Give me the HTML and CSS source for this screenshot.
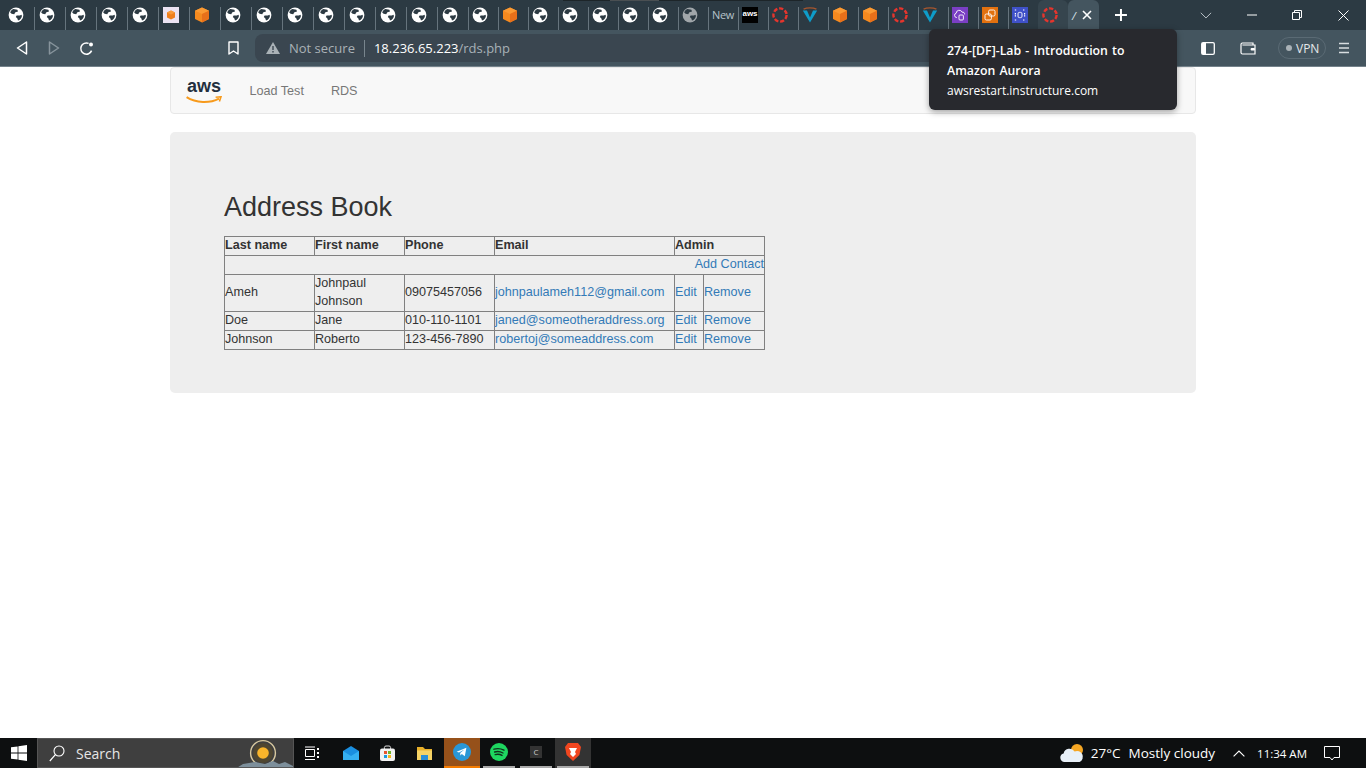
FILE: index.html
```html
<!DOCTYPE html>
<html lang="en">

<head>
    <meta charset="UTF-8">
    <title>Address Book</title>
    <link rel="stylesheet" href="styles.css">
</head>

<body>

    <svg class="defs" width="0" height="0">
        <symbol id="globe" viewBox="0 0 16 16">
            <circle cx="8" cy="8" r="7.4" fill="#fff" />
            <path d="M5.4 2 9.4 2.8 10 4.4 7.4 5.2 6.2 7.2 3.6 6.8 2.2 5.4C2.8 3.8 4 2.6 5.4 2Z" fill="#2c3a43" />
            <path d="M8.6 8.4 11.8 8.6 13.6 7.8 13.9 9.2C13.4 11.2 12 12.8 10 13.6L9.4 11.4 7.8 10Z" fill="#2c3a43" />
        </symbol>
        <symbol id="cube" viewBox="0 0 16 16">
            <path d="M8 .6 15 3.8V12L8 15.4 1 12V3.8Z" fill="#f58a1f" />
            <path d="M8 .6 15 3.8 8 7 1 3.8Z" fill="#fb9a33" />
            <path d="M8 7 15 3.8V12L8 15.4Z" fill="#e8701a" />
        </symbol>
        <symbol id="ring" viewBox="0 0 16 16">
            <circle cx="8" cy="8" r="6.6" fill="none" stroke="#e5352d" stroke-width="2.4" stroke-dasharray="4.2 1.8" />
        </symbol>
        <symbol id="vee" viewBox="0 0 16 16">
            <path d="M1.6 2.2C5 .4 11 .4 14.4 2.2" fill="none" stroke="#a8562e" stroke-width="1.4" />
            <path d="M.8 3.4H5L8 10.4 11 3.4H15.2L8 15.6Z" fill="#0e9cc9" />
        </symbol>
    </svg>

    <div class="tab_scroll"><div class="tab_scroll_thumb"></div></div>

    <div class="tabstrip">
        <div class="tab wide"><svg class="fav"><use href="#globe" /></svg></div>
        <div class="tab wide"><svg class="fav"><use href="#globe" /></svg></div>
        <div class="tab wide"><svg class="fav"><use href="#globe" /></svg></div>
        <div class="tab wide"><svg class="fav"><use href="#globe" /></svg></div>
        <div class="tab wide"><svg class="fav"><use href="#globe" /></svg></div>
        <div class="tab wide">
            <svg class="fav" viewBox="0 0 16 16">
                <rect width="16" height="16" fill="#ebe2f2" />
                <path d="M8 3.4 12 5.4V10.4L8 12.6 4 10.4V5.4Z" fill="#f07f1c" />
                <path d="M8 3.4 12 5.4 8 7.4 4 5.4Z" fill="#f99a3a" />
            </svg>
        </div>
        <div class="tab wide"><svg class="fav"><use href="#cube" /></svg></div>
        <div class="tab wide"><svg class="fav"><use href="#globe" /></svg></div>
        <div class="tab wide"><svg class="fav"><use href="#globe" /></svg></div>
        <div class="tab wide"><svg class="fav"><use href="#globe" /></svg></div>
        <div class="tab wide"><svg class="fav"><use href="#globe" /></svg></div>
        <div class="tab wide"><svg class="fav"><use href="#globe" /></svg></div>
        <div class="tab wide"><svg class="fav"><use href="#globe" /></svg></div>
        <div class="tab wide"><svg class="fav"><use href="#globe" /></svg></div>
        <div class="tab wide"><svg class="fav"><use href="#globe" /></svg></div>
        <div class="tab"><svg class="fav"><use href="#globe" /></svg></div>
        <div class="tab"><svg class="fav"><use href="#cube" /></svg></div>
        <div class="tab"><svg class="fav"><use href="#globe" /></svg></div>
        <div class="tab"><svg class="fav"><use href="#globe" /></svg></div>
        <div class="tab"><svg class="fav"><use href="#globe" /></svg></div>
        <div class="tab"><svg class="fav"><use href="#globe" /></svg></div>
        <div class="tab"><svg class="fav"><use href="#globe" /></svg></div>
        <div class="tab"><svg class="fav dim"><use href="#globe" /></svg></div>
        <div class="tab"><span class="tab_title">New</span></div>
        <div class="tab"><div class="fav aws_fav">aws</div></div>
        <div class="tab"><svg class="fav"><use href="#ring" /></svg></div>
        <div class="tab"><svg class="fav"><use href="#vee" /></svg></div>
        <div class="tab"><svg class="fav"><use href="#cube" /></svg></div>
        <div class="tab"><svg class="fav"><use href="#cube" /></svg></div>
        <div class="tab"><svg class="fav"><use href="#ring" /></svg></div>
        <div class="tab"><svg class="fav"><use href="#vee" /></svg></div>
        <div class="tab">
            <svg class="fav" viewBox="0 0 16 16">
                <rect width="16" height="16" fill="#7a3fc4" />
                <path d="M5 10.5H4.4A2.2 2.2 0 0 1 4.2 6.2 3 3 0 0 1 10 5.2 2 2 0 0 1 12.6 7.4" fill="none" stroke="#fff" stroke-width=".9" />
                <rect x="7" y="8" width="4.4" height="5" rx="1" fill="none" stroke="#fff" stroke-width=".9" />
            </svg>
        </div>
        <div class="tab">
            <svg class="fav" viewBox="0 0 16 16">
                <rect width="16" height="16" fill="#e2710f" />
                <rect x="3" y="7" width="6.4" height="6" rx="1.4" fill="none" stroke="#fff" stroke-width=".9" />
                <rect x="6.6" y="3" width="6.4" height="6" rx="1.4" fill="none" stroke="#fff" stroke-width=".9" />
            </svg>
        </div>
        <div class="tab">
            <svg class="fav" viewBox="0 0 16 16">
                <rect width="16" height="16" fill="#3f51c8" />
                <rect x="6" y="5.4" width="4" height="5.2" rx="1.4" fill="none" stroke="#fff" stroke-width=".9" />
                <path d="M2.8 3H5M11 3H13.2M2.8 13H5M11 13H13.2M3.4 6V10M12.6 6V10" stroke="#fff" stroke-width="1.2" stroke-dasharray="1.4 .8" />
            </svg>
        </div>
        <div class="tab hovered"><svg class="fav"><use href="#ring" /></svg></div>
        <div class="tab active">
            <span class="tab_sliver">/</span>
            <svg class="tab_close" viewBox="0 0 10 10"><path d="M1 1 9 9M9 1 1 9" stroke="#fff" stroke-width="1.6" /></svg>
        </div>
        <svg class="new_tab" viewBox="0 0 12 12"><path d="M6 0V12M0 6H12" stroke="#fff" stroke-width="2" /></svg>
        <svg class="tab_list" viewBox="0 0 12 7"><path d="M.8 .8 6 6 11.2 .8" fill="none" stroke="#b9c2c8" stroke-width="1" /></svg>
        <div class="win_btn minimize"><svg width="10" height="10" viewBox="0 0 10 10"><path d="M0 5H10" stroke="#fff" /></svg></div>
        <div class="win_btn"><svg width="10" height="10" viewBox="0 0 10 10"><path d="M.5 2.5H7.5V9.5H.5ZM2.5 2.5V.5H9.5V7.5H7.5" fill="none" stroke="#fff" /></svg></div>
        <div class="win_btn"><svg width="11" height="11" viewBox="0 0 11 11"><path d="M.5 .5 10.5 10.5M10.5 .5 .5 10.5" stroke="#fff" /></svg></div>
    </div>

    <div class="toolbar">
        <div class="tool_btn"><svg width="12" height="14" viewBox="0 0 12 14"><path d="M10.5 1V13L1.5 7Z" fill="none" stroke="#fff" stroke-width="1.5" stroke-linejoin="round" /></svg></div>
        <div class="tool_btn"><svg width="12" height="14" viewBox="0 0 12 14"><path d="M1.5 1V13L10.5 7Z" fill="none" stroke="#87949c" stroke-width="1.5" stroke-linejoin="round" /></svg></div>
        <div class="tool_btn"><svg width="15" height="15" viewBox="0 0 15 15"><path d="M12.6 9.6A5.6 5.6 0 1 1 9.6 2.4" fill="none" stroke="#fff" stroke-width="1.5" /><circle cx="12" cy="3.4" r="2" fill="#fff" /></svg></div>
        <div class="tool_btn bookmark"><svg width="11" height="14" viewBox="0 0 11 14"><path d="M1 1H10V13L5.5 10 1 13Z" fill="none" stroke="#fff" stroke-width="1.4" stroke-linejoin="round" /></svg></div>
        <div class="urlbar">
            <svg class="warn" width="14" height="12" viewBox="0 0 14 12"><path d="M7 0 14 12H0Z" fill="#aab2b7" /><path d="M7 4V8M7 9V10.6" stroke="#3a4650" stroke-width="1.4" /></svg>
            <span class="not_secure">Not secure</span>
            <span class="url_host">18.236.65.223</span><span class="url_path">/rds.php</span>
        </div>
        <div class="tool_btn side_panel"><svg width="14" height="13" viewBox="0 0 14 13"><rect x=".7" y=".7" width="12.6" height="11.6" rx="1.4" fill="none" stroke="#fff" stroke-width="1.3" /><rect x="1" y="1" width="4" height="11" fill="#fff" /></svg></div>
        <div class="tool_btn wallet"><svg width="16" height="13" viewBox="0 0 16 13"><path d="M13 2.6V1H2.4A1.5 1.5 0 0 0 1 2.5V10.5A1.5 1.5 0 0 0 2.5 12H15V3H2.4" fill="none" stroke="#fff" stroke-width="1.2" /><rect x="10.6" y="6" width="4.4" height="2.6" rx="1" fill="#fff" /></svg></div>
        <div class="vpn"><span class="vpn_dot"></span>VPN</div>
        <div class="tool_btn menu"><svg width="12" height="12" viewBox="0 0 12 12"><path d="M1 1.5H11M1 6H11M1 10.5H11" stroke="#d8dde0" stroke-width="1.4" /></svg></div>
    </div>

    <div class="tooltip">
        <div class="tooltip_title">274-[DF]-Lab - Introduction to Amazon Aurora</div>
        <div class="tooltip_host">awsrestart.instructure.com</div>
    </div>

    <div class="page">
        <div class="container">
            <div class="navbar">
                <div class="aws_logo">
                    <span class="aws_word">aws</span>
                    <svg class="aws_smile" viewBox="0 0 36 8"><path d="M.6 1.2C10 7.4 24 7.4 33 2.6" fill="none" stroke="#f79a1c" stroke-width="2" /><path d="M29.6 1.2 35 .8 33.4 5.4" fill="none" stroke="#f79a1c" stroke-width="1.6" /></svg>
                </div>
                <a class="nav_link">Load Test</a>
                <a class="nav_link">RDS</a>
            </div>

            <div class="jumbotron">
                <h1>Address Book</h1>
                <table>
                    <colgroup>
                        <col class="col_name">
                        <col class="col_name">
                        <col class="col_name">
                        <col class="col_email">
                        <col class="col_edit">
                        <col class="col_remove">
                    </colgroup>
                    <tr>
                        <th>Last name</th>
                        <th>First name</th>
                        <th>Phone</th>
                        <th>Email</th>
                        <th colspan="2">Admin</th>
                    </tr>
                    <tr>
                        <td colspan="6" class="add_row"><a>Add Contact</a></td>
                    </tr>
                    <tr class="tall_row">
                        <td>Ameh</td>
                        <td class="two_line">Johnpaul Johnson</td>
                        <td>09075457056</td>
                        <td><a>johnpaulameh112@gmail.com</a></td>
                        <td><a>Edit</a></td>
                        <td><a>Remove</a></td>
                    </tr>
                    <tr>
                        <td>Doe</td>
                        <td>Jane</td>
                        <td>010-110-1101</td>
                        <td><a>janed@someotheraddress.org</a></td>
                        <td><a>Edit</a></td>
                        <td><a>Remove</a></td>
                    </tr>
                    <tr>
                        <td>Johnson</td>
                        <td>Roberto</td>
                        <td>123-456-7890</td>
                        <td><a>robertoj@someaddress.com</a></td>
                        <td><a>Edit</a></td>
                        <td><a>Remove</a></td>
                    </tr>
                </table>
            </div>
        </div>
    </div>

    <div class="taskbar">
        <div class="start">
            <svg width="16" height="16" viewBox="0 0 16 16"><path d="M0 2.3 6.6 1.4V7.6H0ZM7.4 1.3 16 0V7.6H7.4ZM0 8.4H6.6V14.6L0 13.7ZM7.4 8.4H16V16L7.4 14.7Z" fill="#fff" /></svg>
        </div>
        <div class="search">
            <svg width="16" height="17" viewBox="0 0 16 17"><circle cx="10" cy="6" r="5" fill="none" stroke="#fff" stroke-width="1.1" /><path d="M6.4 9.6 .8 16" stroke="#fff" stroke-width="1.2" /></svg>
            <span class="search_text">Search</span>
            <svg class="search_art" width="62" height="30" viewBox="0 0 62 30">
                <circle cx="32" cy="14" r="12.4" fill="#3f3f3f" stroke="#d8c9a0" stroke-width="1.4" />
                <circle cx="32" cy="14" r="10" fill="#4f4630" />
                <circle cx="32" cy="14" r="5.8" fill="#f9b52b" />
                <path d="M4 30 12 25 24 23 34 25 42 22 48 25 54 23 62 27V30Z" fill="#7d8f9b" />
            </svg>
        </div>
        <div class="task_icon"><svg width="15" height="15" viewBox="0 0 15 15"><path d="M.5 3.5H9.5V10.5H.5ZM0 1H10M0 13.5H10" fill="none" stroke="#fff" /><path d="M13 2V4M13 6V8M13 10V12" stroke="#fff" stroke-width="2" /></svg></div>
        <div class="task_icon mail"><svg width="16" height="14" viewBox="0 0 16 14"><path d="M0 5 8 0 16 5V14H0Z" fill="#1a8fe0" /><path d="M0 5 8 10 16 5V14H0Z" fill="#35b0f2" /></svg></div>
        <div class="task_icon"><svg width="15" height="16" viewBox="0 0 15 16"><path d="M4.4 4V2.4A1.6 1.6 0 0 1 6 1H9A1.6 1.6 0 0 1 10.6 2.4V4" fill="none" stroke="#ddd" /><rect y="3.4" width="15" height="12.6" rx="2" fill="#f2f2f2" /><rect x="4" y="6" width="3" height="3" fill="#e8542c" /><rect x="8" y="6" width="3" height="3" fill="#6fb52c" /><rect x="4" y="10" width="3" height="3" fill="#1a9be0" /><rect x="8" y="10" width="3" height="3" fill="#f5b81c" /></svg></div>
        <div class="task_icon explorer"><svg width="15" height="13" viewBox="0 0 15 13"><path d="M0 0H6L8 2H15V13H0Z" fill="#e8b02a" /><path d="M0 3.4H15V13H0Z" fill="#f6d365" /><rect x="4" y="8" width="7" height="5" fill="#2a8fd8" /></svg></div>
        <div class="task_icon telegram"><svg width="18" height="18" viewBox="0 0 18 18"><circle cx="9" cy="9" r="9" fill="#2a97d6" /><path d="M3.6 8.8 13.4 4.8 11.8 13.2 8.8 11 7.4 12.4 7.2 10 11.4 6.4 6 9.6Z" fill="#fff" /></svg></div>
        <div class="task_icon running"><svg width="18" height="18" viewBox="0 0 18 18"><circle cx="9" cy="9" r="9" fill="#1ed760" /><path d="M4 6.2C7.4 5.2 11 5.6 14 7.2M4.6 9C7.4 8.2 10.4 8.6 13 10M5.2 11.6C7.6 11 10 11.2 12 12.4" fill="none" stroke="#10301c" stroke-width="1.4" stroke-linecap="round" /></svg></div>
        <div class="task_icon running"><div class="c_box">C</div></div>
        <div class="task_icon running open"><svg width="16" height="18" viewBox="0 0 16 18"><path d="M3 0H13L16 4 14.4 12 8 18 1.6 12 0 4Z" fill="#f1461f" /><path d="M4 5H12L10 9 11 11 8 14 5 11 6 9Z" fill="#fff" /></svg></div>
        <div class="tray">
            <svg width="26" height="20" viewBox="0 0 26 20"><circle cx="18" cy="7" r="6" fill="#f5a623" /><path d="M5 19A4.4 4.4 0 0 1 4.6 10.4 6 6 0 0 1 15.6 8.6 5.2 5.2 0 0 1 20.6 19Z" fill="#e8f0f8" /></svg>
            <span class="temp">27°C</span>
            <span class="weather">Mostly cloudy</span>
            <svg class="tray_up" width="12" height="7" viewBox="0 0 12 7"><path d="M.6 6.4 6 1 11.4 6.4" fill="none" stroke="#fff" stroke-width="1.1" /></svg>
            <span class="clock">11:34 AM</span>
            <svg class="notify" width="16" height="15" viewBox="0 0 16 15"><path d="M.5 .5H15.5V11.5H10L8 14 6 11.5H.5Z" fill="none" stroke="#fff" /></svg>
        </div>
    </div>

</body>

</html>
```

FILE: styles.css
```css
* {
    box-sizing: border-box;
}

html,
body {
    height: 100%;
}

body {
    margin: 0;
    display: flex;
    flex-direction: column;
    height: 768px;
    overflow: hidden;
    background-color: white;
    font-family: "Open Sans", "Noto Sans", sans-serif;
}

.defs {
    position: absolute;
}

/* tab strip */

.tab_scroll {
    position: absolute;
    top: 0;
    left: 563px;
    width: 240px;
    height: 1px;
    background-color: #1d2529;
}

.tab_scroll_thumb {
    width: 49px;
    height: 1px;
    margin-left: 47px;
    background-color: #4a4f52;
}

.tabstrip {
    display: flex;
    align-items: center;
    flex: none;
    height: 30px;
    padding-left: 4px;
    background-color: #2c3a43;
}

.tab {
    display: flex;
    align-items: flex-start;
    align-self: flex-end;
    flex: none;
    width: 30px;
    height: 23px;
    padding-left: 3px;
    border-right: 1px solid #66747d;
}

.tab.wide {
    width: 31px;
    padding-left: 4px;
}

.tab.hovered {
    align-items: center;
    height: 30px;
    margin-left: -1px;
    padding-left: 4px;
    border-right: none;
    border-radius: 6px 6px 0 0;
    background-color: #36454e;
}

.tab.active {
    align-items: center;
    width: 31px;
    height: 30px;
    padding-left: 4px;
    border-right: none;
    border-radius: 6px 6px 0 0;
    background-color: #44555f;
}

.fav {
    flex: none;
    width: 16px;
    height: 16px;
}

.fav.dim {
    opacity: 0.55;
}

.tab_title {
    color: #b6c2ca;
    font-size: 11px;
    letter-spacing: -0.3px;
    line-height: 16px;
}

.aws_fav {
    background-color: black;
    color: white;
    font-family: "Liberation Sans", sans-serif;
    font-size: 8px;
    font-weight: bold;
    line-height: 14px;
    text-align: center;
}

.tab_sliver {
    width: 8px;
    font-size: 11px;
    font-style: italic;
    color: #d7e3ea;
}

.tab_close {
    width: 10px;
    height: 10px;
    margin-left: 2px;
}

.new_tab {
    width: 12px;
    height: 12px;
    margin-left: 16px;
}

.tab_list {
    width: 12px;
    height: 7px;
    margin-left: 73px;
}

.win_btn {
    display: flex;
    align-items: center;
    justify-content: center;
    width: 46px;
    height: 30px;
}

.minimize {
    margin-left: 17px;
}

/* toolbar */

.toolbar {
    display: flex;
    align-items: center;
    flex: none;
    height: 37px;
    padding: 0 6px;
    border-bottom: 1px solid #74828b;
    background-color: #44555f;
}

.tool_btn {
    display: flex;
    align-items: center;
    justify-content: center;
    flex: none;
    width: 32px;
    height: 28px;
}

.bookmark {
    margin-left: 115px;
}

.urlbar {
    display: flex;
    align-items: center;
    flex: 1;
    height: 28px;
    margin-left: 6px;
    margin-right: 22px;
    padding-left: 11px;
    border-radius: 8px;
    background-color: #3a4650;
    font-size: 13px;
}

.not_secure {
    margin-left: 9px;
    padding-right: 9px;
    border-right: 1px solid #78858d;
    color: #aab2b7;
    line-height: 17px;
}

.url_host {
    margin-left: 9px;
    color: white;
}

.url_path {
    color: #a8b1b7;
}

.wallet {
    margin-left: 8px;
}

.vpn {
    display: flex;
    align-items: center;
    flex: none;
    width: 48px;
    height: 22px;
    margin-left: 14px;
    padding-left: 7px;
    border: 1px solid #5a6a74;
    border-radius: 11px;
    color: #e4e8ea;
    font-size: 12px;
}

.vpn_dot {
    width: 6px;
    height: 6px;
    margin-right: 4px;
    border-radius: 50%;
    background-color: #aab2b7;
}

.menu {
    margin-left: 2px;
}

/* tab hover card */

.tooltip {
    position: absolute;
    top: 29px;
    left: 929px;
    width: 248px;
    height: 81px;
    padding: 12px 18px;
    border-radius: 6px;
    background-color: #28292e;
    box-shadow: 0 2px 6px rgba(0, 0, 0, 0.35);
    color: white;
    font-size: 12px;
    line-height: 20px;
}

.tooltip_title {
    font-size: 12.3px;
    font-weight: 600;
    word-spacing: 1px;
}

/* the page itself */

.page {
    flex: 1;
    overflow: hidden;
    color: #333;
    font-family: "Liberation Sans", Arial, sans-serif;
    font-size: 12.6px;
    line-height: 18px;
}

.container {
    width: 1026px;
    margin: 0 auto;
}

.navbar {
    display: flex;
    align-items: center;
    height: 47px;
    margin-bottom: 18px;
    padding-left: 15px;
    border: 1px solid #e7e7e7;
    border-radius: 4px;
    background-color: #f8f8f8;
}

.aws_logo {
    position: relative;
    width: 36px;
    height: 26px;
    margin-right: 14px;
}

.aws_word {
    display: block;
    color: #232f3e;
    font-size: 18px;
    font-weight: bold;
    line-height: 17px;
    text-align: center;
}

.aws_smile {
    position: absolute;
    left: 0;
    bottom: 0;
    width: 36px;
    height: 8px;
}

.nav_link {
    padding: 0 13.5px;
    color: #777;
}

.jumbotron {
    height: 261px;
    padding: 43px 54px;
    border-radius: 5px;
    background-color: #eee;
}

h1 {
    margin: 17px 0 13px;
    font-size: 27px;
    font-weight: 500;
    line-height: 31px;
}

table {
    width: 541px;
    table-layout: fixed;
    border-collapse: collapse;
}

th,
td {
    padding: 0 0 1px;
    border: 1px solid #808080;
    line-height: 17px;
    text-align: left;
}

td a {
    color: #337ab7;
}

.add_row {
    text-align: right;
}

.tall_row {
    height: 37px;
}

td.two_line {
    line-height: 17.5px;
}

.col_name {
    width: 90px;
}

.col_email {
    width: 180px;
}

.col_edit {
    width: 29px;
}

.col_remove {
    width: 61px;
}

/* taskbar */

.taskbar {
    display: flex;
    align-items: center;
    flex: none;
    height: 30px;
    background-color: #0d0f10;
    color: white;
}

.start {
    display: flex;
    align-items: center;
    justify-content: center;
    flex: none;
    width: 37px;
    height: 30px;
}

.search {
    position: relative;
    display: flex;
    align-items: center;
    flex: none;
    width: 257px;
    height: 30px;
    padding-left: 11px;
    border: 1px solid #555;
    background-color: #3f3f3f;
    overflow: hidden;
}

.search_text {
    margin-left: 11px;
    color: #e6e6e6;
    font-size: 14px;
}

.search_art {
    position: absolute;
    right: 0;
    top: 0;
}

.task_icon {
    display: flex;
    align-items: center;
    justify-content: center;
    flex: none;
    width: 36px;
    height: 30px;
    margin-right: 1px;
}

.mail {
    margin-left: 2px;
    margin-right: 0;
}

.explorer {
    margin-right: 2px;
}

.telegram {
    border-bottom: 2px solid #f57c00;
    background-color: #96511a;
}

.running {
    border-bottom: 2px solid transparent;
    border-image: linear-gradient(to right, transparent 4px, #aaa 4px, #aaa 32px, transparent 32px) 2;
}

.open {
    background-color: #333;
}

.c_box {
    width: 12px;
    height: 12px;
    background-color: #333;
    color: #ccc;
    font-size: 8px;
    line-height: 12px;
    text-align: center;
}

.tray {
    display: flex;
    align-items: center;
    margin-left: auto;
    font-size: 13.5px;
}

.temp {
    margin-left: 6px;
}

.weather {
    margin-left: 8px;
}

.tray_up {
    margin-left: 18px;
}

.clock {
    margin-left: 12px;
    font-size: 11.5px;
}

.notify {
    margin-left: 17px;
    margin-right: 26px;
}
```
